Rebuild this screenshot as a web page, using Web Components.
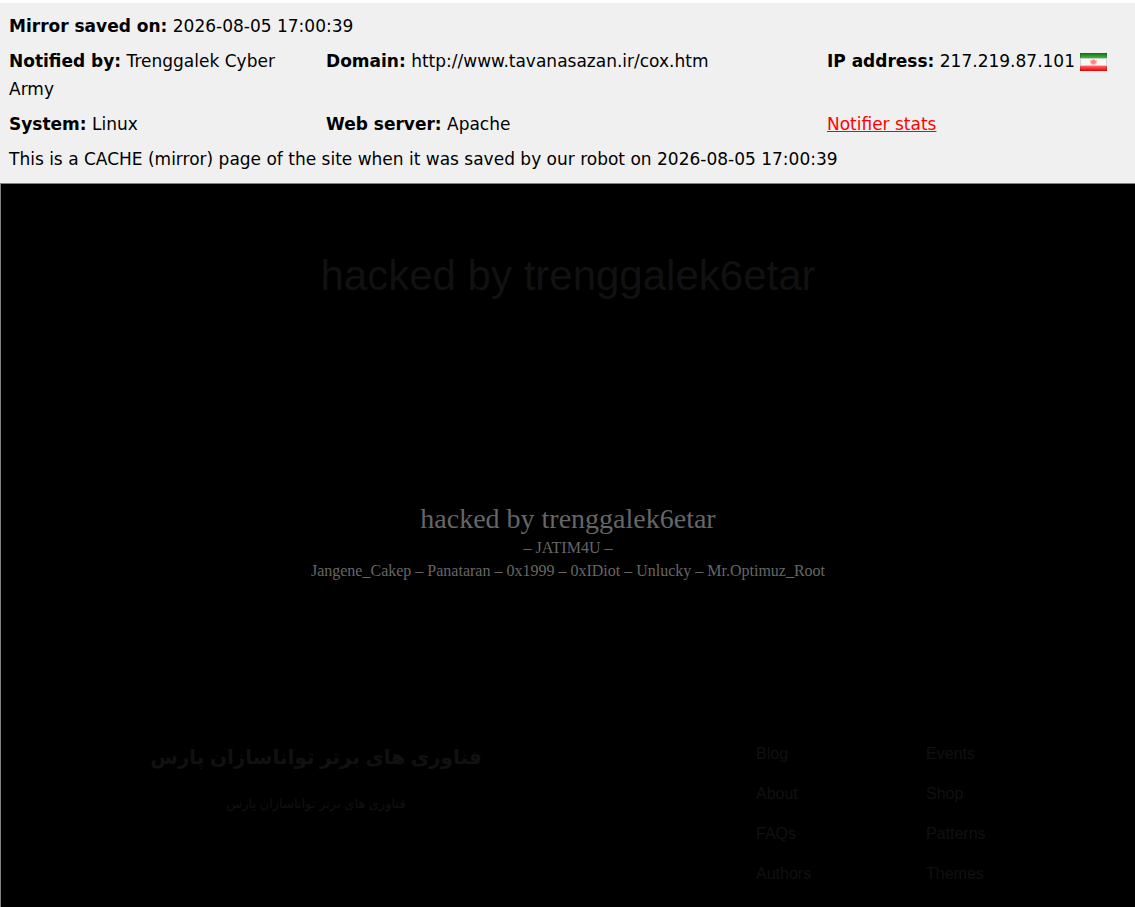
<!DOCTYPE html>
<html lang="en">
<head>
<meta charset="utf-8">
<meta name="viewport" content="width=device-width, initial-scale=1">
<title>Mirror saved on 2026-08-05 17:00:39</title>
<style>
    html {
        height: 100%;
    }
    body {
        display: flex;
        flex-direction: column;
        min-height: 100%;
        margin: 0;
        padding-top: 3px;
        box-sizing: border-box;
        background: #fff;
    }
</style>
</head>
<body>
<mirror-header>
    <mirror-row>
        <mirror-field label="Mirror saved on:">2026-08-05 17:00:39</mirror-field>
    </mirror-row>
    <mirror-row data-columns>
        <mirror-field label="Notified by:">Trenggalek Cyber Army</mirror-field>
        <mirror-field label="Domain:">http://www.tavanasazan.ir/cox.htm</mirror-field>
        <mirror-field label="IP address:">217.219.87.101 <country-flag></country-flag></mirror-field>
    </mirror-row>
    <mirror-row data-columns>
        <mirror-field label="System:">Linux</mirror-field>
        <mirror-field label="Web server:">Apache</mirror-field>
        <notifier-link href="#stats">Notifier stats</notifier-link>
    </mirror-row>
    <mirror-row>This is a CACHE (mirror) page of the site when it was saved by our robot on 2026-08-05 17:00:39</mirror-row>
</mirror-header>
<mirror-page>
    <page-banner slot="banner">hacked by trenggalek6etar</page-banner>
    <page-message slot="message">
        <span slot="title">hacked by trenggalek6etar</span>
        <span slot="group">– JATIM4U –</span>
        <span slot="names">Jangene_Cakep – Panataran – 0x1999 – 0xIDiot – Unlucky – Mr.Optimuz_Root</span>
    </page-message>
    <site-footer slot="footer">
        <span slot="name">فناوری های برتر تواناسازان پارس</span>
        <span slot="tagline">فناوری های برتر تواناسازان پارس</span>
        <link-list slot="links" items="Blog,About,FAQs,Authors"></link-list>
        <link-list slot="links" items="Events,Shop,Patterns,Themes"></link-list>
    </site-footer>
</mirror-page>

<script>
function define (name, html, setup) {
    const template = document.createElement('template');
    template.innerHTML = html;
    window.customElements.define(name, class extends HTMLElement {
        constructor () {
            super();
            this.attachShadow({ mode: 'open' });
            this.shadowRoot.appendChild(template.content.cloneNode(true));
        }
        connectedCallback () {
            if (setup) {
                setup(this, this.shadowRoot);
            }
        }
    });
}

// Grey information bar
define('mirror-header', `
<style>
    :host {
        display: block;
        background: #f0f0f0;
        color: #000;
        font: 17px/28px Verdana, "DejaVu Sans", sans-serif;
    }
    header {
        display: flex;
        flex-direction: column;
        gap: 7px;
        padding: 9px 0 10px 9px;
    }
</style>
<header><slot></slot></header>
`);

define('mirror-row', `
<style>
    :host {
        display: block;
    }
    :host([data-columns]) {
        display: grid;
        grid-template-columns: 63fr 100fr 62fr;
        column-gap: 4px;
    }
</style>
<slot></slot>
`);

define('mirror-field', `
<style>
    :host {
        display: block;
    }
</style>
<b></b> <slot></slot>
`, (host, root) => {
    root.querySelector('b').textContent = host.getAttribute('label');
});

define('notifier-link', `
<style>
    :host {
        display: block;
    }
    a {
        color: #f00;
    }
</style>
<a><slot></slot></a>
`, (host, root) => {
    root.querySelector('a').href = host.getAttribute('href');
});

define('country-flag', `
<style>
    :host {
        display: inline-block;
        vertical-align: middle;
    }
    svg {
        display: block;
    }
</style>
<svg width="27" height="18" viewBox="0 0 27 18" role="img" aria-label="Iran">
    <defs>
        <linearGradient id="green" x2="0" y2="1">
            <stop offset="0" stop-color="#087508"/>
            <stop offset="1" stop-color="#4fae4f"/>
        </linearGradient>
        <linearGradient id="red" x2="0" y2="1">
            <stop offset="0" stop-color="#f66"/>
            <stop offset="1" stop-color="#e80000"/>
        </linearGradient>
    </defs>
    <path fill="#f8f8f8" d="M0 0h27v18H0z"/>
    <path fill="url(#green)" d="M0 0h27v5H0z"/>
    <path fill="#b8dcb8" d="M1 5h25v1H1z"/>
    <path fill="#fbb" d="M1 12h25v1H1z"/>
    <path fill="url(#red)" d="M0 13h27v5H0z"/>
    <path fill="#fbb" d="M13 6h1l1 1h2v3l-2 2h-3l-2-2V7h2z"/>
    <path fill="#f88" d="M12 7h3v1h1v2h-1v1h-3v-1h-1V8h1z"/>
    <path fill="none" stroke="#000" stroke-opacity=".15" d="M.5 0v18M26.5 0v18"/>
</svg>
`);

// Saved page below the bar
define('mirror-page', `
<style>
    :host {
        display: block;
        flex: 1;
        border: solid #808080;
        border-width: 1px 0 0 1px;
        background: #000;
        color: #111;
        font: 16px/24px Arial, "Liberation Sans", "DejaVu Sans", sans-serif;
    }
    main {
        padding-top: 62px;
    }
</style>
<main>
    <slot name="banner"></slot>
    <slot name="message"></slot>
</main>
<slot name="footer"></slot>
`);

define('page-banner', `
<style>
    :host {
        display: block;
        text-align: center;
    }
    h1 {
        margin: 0;
        font-size: 42px;
        line-height: 60px;
        font-weight: 400;
    }
</style>
<h1><slot></slot></h1>
`);

define('page-message', `
<style>
    :host {
        display: block;
        padding: 196px 0 160px;
        color: #666;
        text-align: center;
        font: 16px/23px "Liberation Serif", serif;
    }
    h2 {
        margin: 0;
        font-size: 28px;
        line-height: 34px;
        font-weight: 400;
    }
    p {
        margin: 0;
    }
</style>
<h2><slot name="title"></slot></h2>
<p><slot name="group"></slot></p>
<p><slot name="names"></slot></p>
`);

define('site-footer', `
<style>
    :host {
        display: block;
    }
    footer {
        display: grid;
        grid-template-columns: repeat(12, 1fr);
        column-gap: 30px;
        padding: 0 69px 0 75px;
    }
    div {
        grid-column: span 6;
        text-align: center;
        direction: rtl;
    }
    nav {
        grid-column: 9 / span 4;
        display: grid;
        grid-template-columns: 1fr 1fr;
        column-gap: 30px;
    }
    h3 {
        margin: 0 0 20px;
        font-size: 20px;
        line-height: 30px;
    }
    p {
        margin: 0;
        font-size: 13px;
    }
</style>
<footer>
    <div>
        <h3><slot name="name"></slot></h3>
        <p><slot name="tagline"></slot></p>
    </div>
    <nav><slot name="links"></slot></nav>
</footer>
`);

define('link-list', `
<style>
    :host {
        display: block;
    }
    ul {
        margin: 0;
        padding: 0;
        list-style: none;
    }
    li {
        padding-bottom: 16px;
    }
    li:last-child {
        padding-bottom: 0;
    }
    a {
        color: inherit;
        text-decoration: none;
    }
</style>
<ul></ul>
`, (host, root) => {
    host.getAttribute('items').split(',').forEach((text) => {
        const item = document.createElement('li');
        const link = document.createElement('a');
        link.href = '#' + text.toLowerCase();
        link.textContent = text;
        item.appendChild(link);
        root.querySelector('ul').appendChild(item);
    });
});
</script>
</body>
</html>
